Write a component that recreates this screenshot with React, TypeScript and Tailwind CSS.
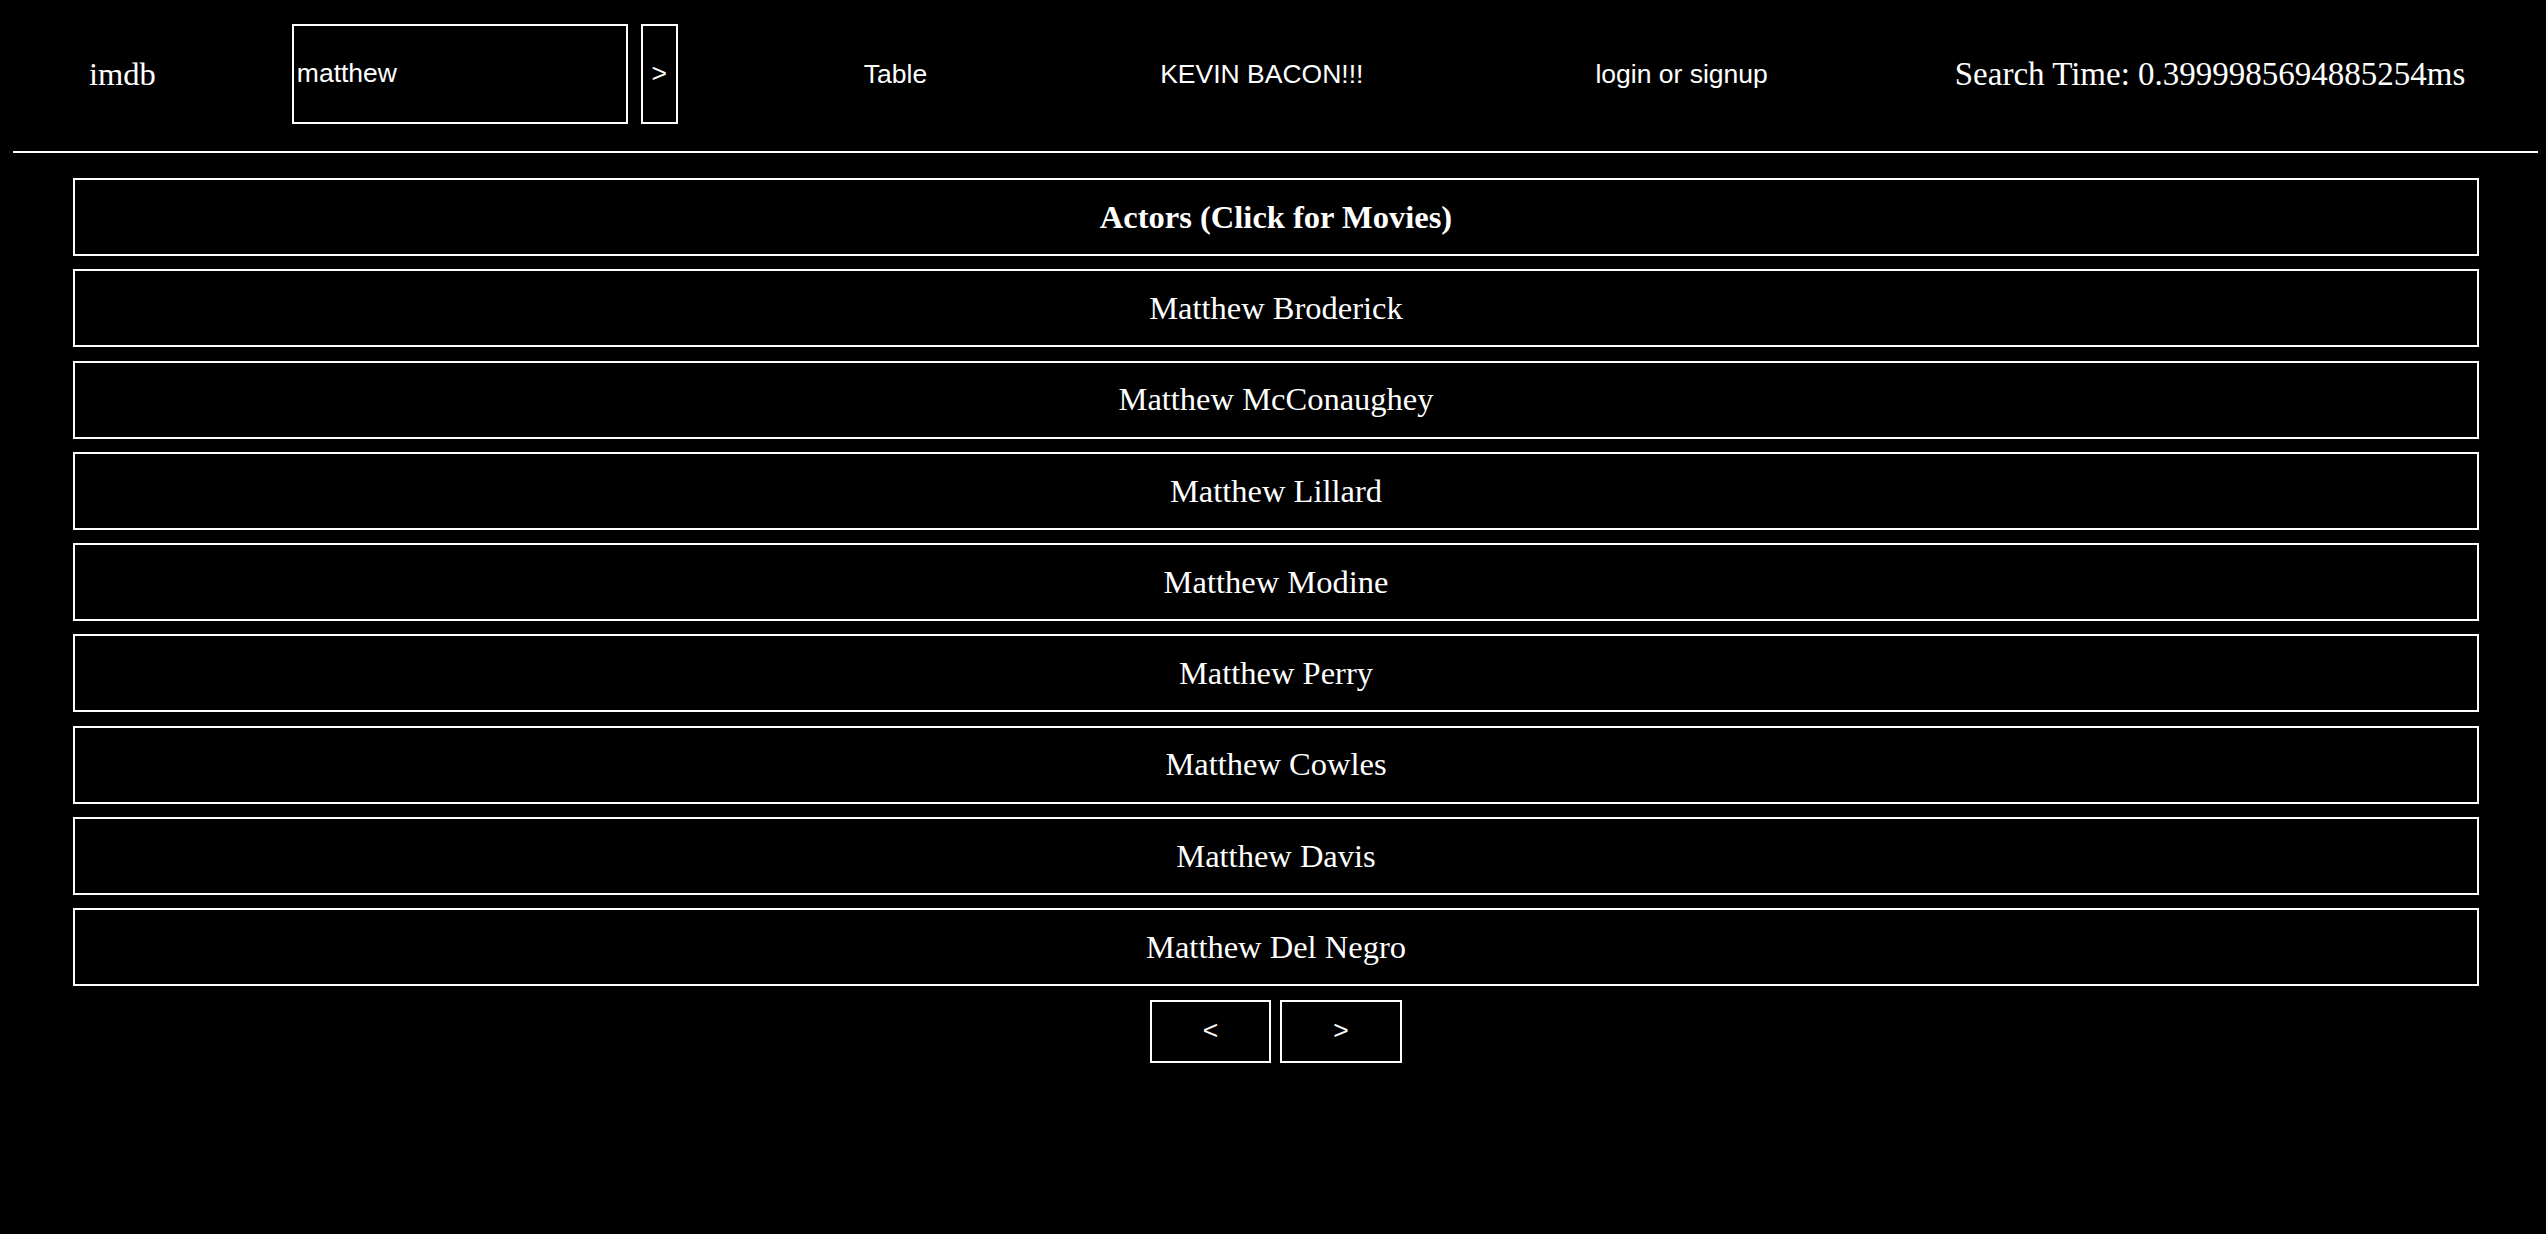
import { useState } from "react";

const actors = [
  "Matthew Broderick",
  "Matthew McConaughey",
  "Matthew Lillard",
  "Matthew Modine",
  "Matthew Perry",
  "Matthew Cowles",
  "Matthew Davis",
  "Matthew Del Negro",
];

const serif = "font-['Liberation_Serif','Times_New_Roman',serif]";
const sans = "font-['Liberation_Sans',Arial,sans-serif]";

export default function App() {
  const [query, setQuery] = useState("matthew");

  return (
    <div className={`min-h-screen bg-black pl-[13px] pr-[8px] text-white ${serif}`}>
      {/* top nav */}
      <div className="flex h-[151px] items-center pb-[3px]">
        <span className="ml-[76px] text-[32.5px] leading-none">imdb</span>

        <form
          className="ml-[136px] flex h-[100px] items-stretch gap-[13px]"
          onSubmit={(e) => e.preventDefault()}
        >
          <input
            value={query}
            onChange={(e) => setQuery(e.target.value)}
            className={`w-[336px] border-2 border-white bg-black px-[3px] text-[26.5px] text-white outline-none ${sans}`}
          />
          <button
            type="submit"
            className={`w-[37px] border-2 border-white bg-black text-[26.5px] text-white ${sans}`}
          >
            &gt;
          </button>
        </form>

        <span className={`ml-[186px] text-[26.5px] leading-none ${sans}`}>Table</span>
        <span className={`ml-[233px] text-[26.5px] leading-none ${sans}`}>KEVIN BACON!!!</span>
        <span className={`ml-[232px] text-[26.5px] leading-none ${sans}`}>login or signup</span>
        <span className="ml-[187px] text-[33px] leading-none">
          Search Time: 0.3999985694885254ms
        </span>
      </div>

      <div className="h-[2px] bg-white" />

      {/* results */}
      <div className="ml-[60px] mt-[25px] flex w-[2406px] flex-col gap-[13.3px]">
        <div className="flex h-[78px] items-center justify-center border-2 border-white text-[32.5px] font-bold">
          Actors (Click for Movies)
        </div>
        {actors.map((name) => (
          <div
            key={name}
            className="flex h-[78px] cursor-pointer items-center justify-center border-2 border-white text-[32.5px]"
          >
            {name}
          </div>
        ))}

        <div className="flex justify-center gap-[9px]">
          <button className={`h-[63px] w-[121px] border-2 border-white bg-black text-[26.5px] text-white ${sans}`}>
            &lt;
          </button>
          <button className={`h-[63px] w-[122px] border-2 border-white bg-black text-[26.5px] text-white ${sans}`}>
            &gt;
          </button>
        </div>
      </div>
    </div>
  );
}
